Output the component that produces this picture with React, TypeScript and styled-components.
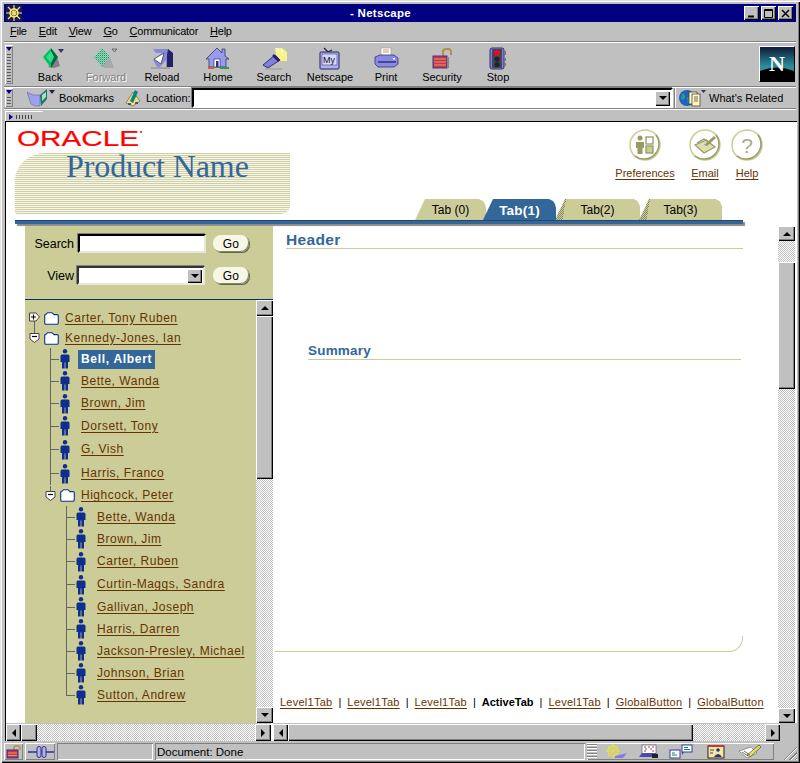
import React from "react";
import styled, { createGlobalStyle } from "styled-components";

const GlobalStyle = createGlobalStyle`
  html, body { margin: 0; padding: 0; background: #c0c0c0; }
  #root { width: 800px; height: 763px; overflow: hidden; }
  * { box-sizing: border-box; }
`;

const checker = `repeating-conic-gradient(#ffffff 0 25%, #c0c0c0 0 50%) 0 0 / 2px 2px`;
const UI = `"Liberation Sans", Arial, sans-serif`;

const Win = styled.div`
  width: 800px; height: 763px; background: #c0c0c0; padding: 4px 4px 3px 4px;
  display: flex; flex-direction: column;
  font-family: ${UI}; font-size: 11px; color: #000;
  box-shadow: inset 1px 1px #dfdfdf, inset 2px 2px #fff, inset -1px -1px #000, inset -2px -2px #808080;
`;
const TitleBar = styled.div`
  height: 18px; flex: none; background: #000080; display: flex; align-items: center;
  padding: 0 3px 0 2px; color: #fff;
`;
const TitleText = styled.div`
  flex: 1; text-align: center; font-weight: 700; font-size: 11.5px; letter-spacing: .3px; padding-right: 5px;
`;
const WinBtn = styled.div<{ $gap?: number }>`
  width: 15px; height: 14px; background: #c0c0c0; margin-left: ${p => p.$gap ?? 0}px;
  box-shadow: inset 1px 1px #fff, inset -1px -1px #000, inset -2px -2px #808080;
  display: flex; align-items: center; justify-content: center;
`;
const MenuBar = styled.div`
  height: 20px; flex: none; display: flex; align-items: center; gap: 12px; padding: 0 0 1px 6px;
  font-size: 11px; letter-spacing: -.25px; border-bottom: 1px solid #808080; box-shadow: 0 1px #fff;
  & > span { display: block; }
`;
const Toolbar = styled.div`
  height: 44px; flex: none; display: flex; padding: 1px 0 0 1px; margin-top: 1px;
  border-bottom: 1px solid #808080; box-shadow: 0 1px #fff;
`;
const Grip = styled.div`
  width: 8px; flex: none; margin-right: 9px; align-self: stretch; margin-top: 1px; margin-bottom: 2px;
  display: flex; flex-direction: column; align-items: center; gap: 2px;
  box-shadow: inset 1px 1px #fff, inset -1px -1px #808080;
  &::before { content: ""; width: 0; height: 0; margin-top: 2px; border: 3px solid transparent; border-top: 4px solid #000080; border-bottom: 0; }
  &::after { content: ""; flex: 1; width: 4px; margin-bottom: 2px; background: radial-gradient(circle, #555 40%, transparent 45%) 0 0 / 2px 3px; }
`;
const ToolBtn = styled.div<{ $off?: boolean }>`
  width: 56px; flex: none; display: flex; flex-direction: column; align-items: center; padding-top: 3px;
  color: ${p => (p.$off ? "#808080" : "#000")};
  text-shadow: ${p => (p.$off ? "1px 1px #fff" : "none")};
  & > svg { display: block; }
`;
const ToolLabel = styled.div` line-height: 13px; white-space: nowrap; `;
const Throbber = styled.div`
  width: 36px; height: 36px; margin: 2px 1px 0 auto; flex: none; overflow: hidden;
  border: 1px solid #000; border-top-color: #fff; border-left-color: #fff;
  & > svg { display: block; }
`;
const LocBar = styled.div`
  height: 21px; flex: none; display: flex; align-items: center; padding-left: 1px; margin-top: 1px;
  border-bottom: 1px solid #808080; box-shadow: 0 1px #fff;
`;
const LocGrip = styled(Grip)` margin-right: 14px; margin-top: 0; margin-bottom: 1px; `;
const LocText = styled.div<{ $w: number; $ml?: number }>`
  width: ${p => p.$w}px; margin-left: ${p => p.$ml ?? 0}px; flex: none; white-space: nowrap; font-size: 11px;
  & > svg { display: block; }
`;
const LocInput = styled.div`
  width: 481px; height: 20px; flex: none; margin-left: 3px; background: #fff; display: flex; justify-content: flex-end; align-items: center; padding-right: 1px;
  border: 2px solid; border-color: #000 #fff #fff #000; box-shadow: -1px -1px #808080;
`;
const Sep = styled.div` width: 2px; height: 20px; margin-left: 1px; background: #808080; border-right: 1px solid #fff; flex: none; `;
const TabBar = styled.div` height: 12px; flex: none; padding: 2px 0 0 1px; display: flex; `;
const Collapsed = styled.div`
  width: 38px; height: 10px; background: #c0c0c0; display: flex; align-items: center; gap: 2px; padding-left: 3px;
  border-top: 1px solid #fff; border-left: 1px solid #fff;
  clip-path: polygon(0 0, 100% 0, 80% 100%, 0 100%);
  &::before { content: ""; border: 3px solid transparent; border-left: 4px solid #000080; border-right: 0; }
  &::after { content: ""; width: 18px; height: 4px; background: radial-gradient(circle, #444 40%, transparent 45%) 0 0 / 3px 2px; }
`;
const Body = styled.div`
  height: 620px; flex: none; margin-left: 1px; margin-right: -1px; background: #fff; display: flex; flex-direction: column;
  border-top: 1px solid #000; border-left: 1px solid #000; overflow: hidden;
`;
const Banner = styled.div` height: 98px; flex: none; padding-left: 9px; width: 760px; display: flex; justify-content: space-between; `;
const BrandCol = styled.div` display: flex; flex-direction: column; padding-left: 1px; & > svg { display: block; margin: 4px 0 0 1px; } `;
const Band = styled.div`
  width: 275px; height: 61px; margin: 2px 0 0 -1px; padding-left: 51px;
  background: repeating-linear-gradient(to bottom, #cfcfa6 0 1px, #f6f6ea 1px 2px);
  border-radius: 30px 0 10px 3px / 28px 0 8px 2px;
  font-family: "Liberation Serif", "Times New Roman", serif; font-size: 32px; color: #336699; line-height: 26px; letter-spacing: -.1px; white-space: nowrap;
`;
const NavCol = styled.div` display: flex; flex-direction: column; align-items: flex-end; `;
const GlobalNav = styled.div` display: grid; grid-template-columns: 74px 42px 32px; justify-items: start; padding: 7px 0 0 0; margin-right: 3px; `;
const NavItem = styled.div<{ $w: number }>`
  width: ${p => p.$w}px; display: flex; flex-direction: column; align-items: center; gap: 6px;
  & > svg { display: block; }
`;
const Link = styled.a`
  color: #663300; text-decoration: underline; text-underline-offset: 2px; white-space: nowrap; font-size: 11px; line-height: 13px;
`;
const FootLink = styled(Link)` letter-spacing: .25px; `;
const Tabs = styled.div` display: flex; margin-top: auto; margin-right: 44px; align-items: flex-end; `;
const Tab = styled.div<{ $w: number; $active?: boolean; $dither?: boolean; $ml?: number }>`
  width: ${p => p.$w}px; height: 21px; margin-left: ${p => p.$ml ?? 0}px; flex: none;
  display: flex; align-items: center; justify-content: center; padding-top: 1px;
  font-size: ${p => (p.$active ? 13.5 : 12)}px; font-weight: ${p => (p.$active ? 700 : 400)};
  letter-spacing: ${p => (p.$active ? ".2px" : "0")};
  color: ${p => (p.$active ? "#fff" : "#000")};
  background: ${p =>
    p.$active
      ? "#336699"
      : p.$dither
      ? "linear-gradient(100deg, transparent 11px, #cccc99 11px), repeating-conic-gradient(#cccc99 0 25%, #888866 0 50%) 0 0 / 2px 2px"
      : "#cccc99"};
  clip-path: polygon(0 100%, 10px 0, calc(100% - 7px) 0, calc(100% - 3px) 2px, calc(100% - 1px) 5px, 100% 9px, 100% 100%);
  position: relative; z-index: ${p => (p.$active ? 2 : 1)};
`;
const Rule = styled.div`
  width: 728px; height: 4px; margin-left: 9px; flex: none; background: #336699; border-top: 1px solid #1d4a6e;
  box-shadow: 2px 2px 1px #8a8a8a;
`;
const Frames = styled.div` flex: 1; min-height: 0; display: flex; margin-top: 2px; `;
const LeftFrame = styled.div` width: 267px; flex: none; display: flex; flex-direction: column; `;
const LeftBody = styled.div` flex: 1; min-height: 0; display: flex; padding-left: 19px; `;
const NavPanel = styled.div` width: 248px; display: flex; flex-direction: column; `;
const SearchForm = styled.div`
  height: 74px; flex: none; background: #cccc99; border-bottom: 1px solid #003366; padding-top: 8px;
  display: flex; flex-direction: column; gap: 13px;
`;
const FormRow = styled.div` display: flex; align-items: center; `;
const FormLabel = styled.div` width: 50px; text-align: right; font-size: 12.5px; padding-right: 1px; `;
const TextBox = styled.div`
  width: 128px; height: 19px; background: #fff; margin-left: 3px; flex: none;
  border: 2px solid; border-color: #000 #e8e8d8 #e8e8d8 #000;  box-shadow: -1px -1px #808080;
`;
const SelectBox = styled(TextBox)`
  margin-left: 2px; display: flex; justify-content: flex-end; align-items: center; padding-right: 1px;
  border-color: #333 #e8e8d8 #e8e8d8 #333;
`;
const GoBtn = styled.div<{ $ml: number }>`
  width: 36px; height: 17px; margin-left: ${p => p.$ml}px; flex: none; background: #f7f7e7; border-radius: 8px;
  display: flex; align-items: center; justify-content: center; font-size: 12px; letter-spacing: .3px;
  box-shadow: inset -1px -1px #888866, 1px 1px #666644;
`;
const TreeWrap = styled.div` flex: 1; min-height: 0; display: flex; `;
const Tree = styled.div` width: 231px; flex: none; background: #cccc99; padding-top: 8px; display: flex; flex-direction: column; `;
const Row = styled.div<{ $h: number; $pad: number }>`
  height: ${p => p.$h}px; flex: none; padding-left: ${p => p.$pad}px; display: flex; align-items: center;
  & > svg { display: block; flex: none; }
`;
const ExpanderBox = styled.div`
  width: 15px; flex: none; & > svg { display: block; }
`;
const Branch = styled.div<{ $last?: boolean }>`
  width: 9px; align-self: stretch; flex: none; margin-right: 1px;
  background:
    linear-gradient(#666, #666) left top / 1px ${p => (p.$last ? "50%" : "100%")} no-repeat,
    linear-gradient(#666, #666) left center / 100% 1px no-repeat;
`;
const Name = styled.a<{ $sel?: boolean; $ml: number }>`
  display: block; margin-left: ${p => p.$ml}px; padding: 0 3px; white-space: nowrap; font-size: 12px;
  letter-spacing: ${p => (p.$sel ? ".7px" : ".52px")};
  line-height: ${p => (p.$sel ? "19px" : "17px")};
  color: ${p => (p.$sel ? "#fff" : "#663300")};
  font-weight: ${p => (p.$sel ? 700 : 400)};
  background: ${p => (p.$sel ? "#336699" : "transparent")};
  text-decoration: ${p => (p.$sel ? "none" : "underline")}; text-underline-offset: 2px;
`;
const VScroll = styled.div<{ $w: number }>`
  width: ${p => p.$w}px; flex: none; display: flex; flex-direction: column; background: ${checker};
`;
const ScrollBtn = styled.div<{ $w?: number; $h?: number }>`
  width: ${p => (p.$w ? `${p.$w}px` : "auto")}; height: ${p => (p.$h ? `${p.$h}px` : "auto")}; flex: none;
  background: #c0c0c0; display: flex; align-items: center; justify-content: center;
  box-shadow: inset 1px 1px #fff, inset -1px -1px #000, inset -2px -2px #808080;
`;
const Thumb = styled(ScrollBtn)` `;
const Fill = styled.div` flex: 1; min-width: 0; min-height: 0; `;
const TrackGap = styled.div<{ $h: number }>` height: ${p => p.$h}px; flex: none; `;
const Arrow = styled.div<{ $dir: "up" | "down" | "left" | "right" }>`
  width: 0; height: 0; border: 4px solid transparent;
  ${p => (p.$dir === "up" ? "border-top:0;border-bottom-color:#000;" : "")}
  ${p => (p.$dir === "down" ? "border-bottom:0;border-top-color:#000;" : "")}
  ${p => (p.$dir === "left" ? "border-left:0;border-right-color:#000;" : "")}
  ${p => (p.$dir === "right" ? "border-right:0;border-left-color:#000;" : "")}
`;
const HScroll = styled.div` height: 18px; flex: none; display: flex; background: ${checker}; border-top: 1px solid #c0c0c0; `;
const LeftHScroll = styled(HScroll)` margin-right: 2px; `;
const RightFrame = styled.div` flex: 1; min-width: 0; display: flex; flex-direction: column; `;
const RightBody = styled.div` flex: 1; min-height: 0; display: flex; `;
const Main = styled.div` width: 505px; flex: none; display: flex; flex-direction: column; `;
const H1 = styled.div`
  margin: 5px 35px 0 13px; height: 18px; line-height: 17px; font-size: 15.5px; font-weight: 700; letter-spacing: .35px; color: #336699;
  border-bottom: 1px solid #cccc99;
`;
const H2 = styled.div`
  margin: 94px 37px 0 35px; height: 17px; line-height: 15px; font-size: 13.5px; font-weight: 700; letter-spacing: .2px; color: #336699;
  border-bottom: 1px solid #cccc99;
`;
const Curve = styled.div`
  width: 468px; height: 16px; margin: 276px 0 0 2px; flex: none;
  border-right: 1px solid #cccc99; border-bottom: 1px solid #cccc99; border-bottom-right-radius: 14px;
`;
const Footer = styled.div`
  margin-top: auto; padding: 0 0 14px 7px; display: flex; align-items: center; gap: 6px; font-size: 11px; line-height: 13px; white-space: nowrap;
`;
const Active = styled.b` font-weight: 700; `;
const RCorner = styled.div` width: 17px; flex: none; background: #c0c0c0; `;
const RHBar = styled(HScroll)` flex: 1; `;
const RHWrap = styled.div` display: flex; height: 18px; flex: none; `;
const Status = styled.div` height: 17px; flex: none; margin-top: 2px; display: flex; gap: 2px; `;
const Cell = styled.div<{ $w?: number; $flat?: boolean }>`
  ${p => (p.$w ? `width:${p.$w}px;flex:none;` : "flex:1;")}
  display: flex; align-items: center; padding-left: 2px; font-size: 11.5px; min-width: 0;
  box-shadow: ${p => (p.$flat ? "inset 1px 1px #fff, inset -1px -1px #808080" : "inset 1px 1px #808080, inset -1px -1px #fff")};
`;
const ComponentBar = styled(Cell)` padding-left: 0; gap: 0; `;
const CompGrip = styled.div`
  width: 10px; height: 15px; flex: none; background: repeating-linear-gradient(to bottom, #808080 0 1px, #fff 1px 2px, #c0c0c0 2px 3px);
`;
const CompIcon = styled.div<{ $w: number }>`
  width: ${p => p.$w}px; flex: none; display: flex; justify-content: center; & > svg { display: block; }
`;
const Resize = styled.div`
  width: 14px; height: 14px; flex: none; margin: 3px -1px 0 auto; align-self: flex-end;
  background: repeating-linear-gradient(135deg, transparent 0 2px, #808080 2px 3px, #fff 3px 4px);
  clip-path: polygon(100% 0, 100% 100%, 0 100%);
`;

const Back = ({ off }: { off?: boolean }) => (
  <svg width="28" height="24" viewBox="0 0 28 24">
    <defs>
      <pattern id="dit" width="2" height="2" patternUnits="userSpaceOnUse">
        <rect width="2" height="2" fill="#c0c0c0" />
        <rect width="1" height="1" fill="#00a060" />
        <rect x="1" y="1" width="1" height="1" fill="#40d890" />
      </pattern>
    </defs>
    {off ? (
      <>
        <polygon points="2,10 10,1 18,10 10,20" fill="url(#dit)" />
        <polygon points="10,20 18,10 22,21 14,21" fill="#9a9a9a" opacity=".6" />
        <path d="M20 2h5l-2.5 3z" fill="none" stroke="#555" strokeWidth=".8" />
      </>
    ) : (
      <>
        <polygon points="12,20 21,10 24,19 18,21" fill="#808080" />
        <polygon points="7,10 15,1 15,21" fill="#00c060" />
        <polygon points="15,1 22,10 15,21" fill="#006a3a" />
        <polygon points="10,10 15,4 18,10 15,16" fill="#2ce08a" />
        <path d="M22 2h6l-3 4z" fill="#333366" />
      </>
    )}
  </svg>
);
const Reload = () => (
  <svg width="28" height="24" viewBox="0 0 28 24">
    <path d="M5 13 L14 6 H8 L5 2 H20 L24 6 V20 H18 V13 L12 20 H9Z" fill="#8888dd" />
    <path d="M20 2 L25 6 V20 H19 V8 Z" fill="#222266" />
    <path d="M6 12 L16 6 L13 17 Z" fill="#fff" />
    <path d="M6 12 L16 6 L13 17 Z" fill="none" stroke="#333" strokeWidth=".7" />
    <path d="M3 21 H22" stroke="#999" strokeWidth="1.5" />
  </svg>
);
const Home = () => (
  <svg width="28" height="24" viewBox="0 0 28 24">
    <path d="M2 12 L13 1 L18 6 V2 H21 V9 L25 12 H22 V20 H5 V12Z" fill="#9a9aea" stroke="#333377" strokeWidth=".8" />
    <rect x="10" y="12" width="6" height="8" fill="#fff" stroke="#333377" strokeWidth=".7" />
    <rect x="12" y="14" width="2.5" height="6" fill="#333377" />
    <path d="M4 21 H10" stroke="#d06030" strokeWidth="2" />
    <path d="M16 21 H25" stroke="#2a9a50" strokeWidth="2" />
  </svg>
);
const SearchIc = () => (
  <svg width="28" height="24" viewBox="0 0 28 24">
    <path d="M15 1 H22 L27 5 V14 H21 L16 7Z" fill="#f4f48a" />
    <path d="M16 1 l3 3 m3-2 v4" stroke="#fff" strokeWidth="1" />
    <path d="M3 18 L15 8 L20 13 L8 21 Z" fill="#8080e0" stroke="#222266" strokeWidth=".9" />
    <path d="M13 8 L19 14" stroke="#222266" strokeWidth="2.5" />
    <path d="M5 22 H22" stroke="#999" strokeWidth="1" />
  </svg>
);
const MyNs = () => (
  <svg width="28" height="24" viewBox="0 0 28 24">
    <path d="M8 1 L12 5 L16 3" stroke="#222" strokeWidth="1.2" fill="none" />
    <rect x="4" y="5" width="19" height="17" rx="1" fill="#b0b0f0" stroke="#222266" />
    <rect x="6" y="7" width="15" height="11" fill="#d8d8ff" stroke="#444488" strokeWidth=".6" />
    <text x="7" y="16" fontFamily="Liberation Sans" fontSize="9" fill="#111">My</text>
  </svg>
);
const Print = () => (
  <svg width="28" height="24" viewBox="0 0 28 24">
    <path d="M9 1 H19 V9 H9Z" fill="#fff" stroke="#999" strokeWidth=".6" />
    <path d="M11 3h6M11 5h6" stroke="#d0a060" strokeWidth="1" />
    <path d="M3 10 L8 8 H22 L26 11 V17 L22 20 H6 L3 17Z" fill="#8a8ae6" stroke="#333377" strokeWidth=".8" />
    <path d="M6 15 H24" stroke="#222266" strokeWidth="1.3" />
    <rect x="21" y="11" width="2" height="1.5" fill="#fff" />
  </svg>
);
const Lock = () => (
  <svg width="28" height="24" viewBox="0 0 28 24">
    <path d="M15 9 V5 Q15 2 18 2 H20 Q23 2 23 5 V8" fill="none" stroke="#b0904c" strokeWidth="2" />
    <rect x="5" y="9" width="14" height="12" fill="#c83060" stroke="#3a3a80" />
    <path d="M6 12h12M6 15h12M6 18h12" stroke="#e8a040" strokeWidth="1" />
    <path d="M20 10 V21" stroke="#888" strokeWidth="2" />
  </svg>
);
const Stop = () => (
  <svg width="28" height="24" viewBox="0 0 28 24">
    <rect x="6" y="1" width="14" height="21" rx="2" fill="#8080d8" stroke="#333377" />
    <rect x="8" y="2" width="10" height="19" fill="#44445a" />
    <circle cx="13" cy="6" r="3" fill="#e01020" />
    <circle cx="13" cy="12" r="2.6" fill="#222" />
    <circle cx="13" cy="17.5" r="2.6" fill="#222" />
    <path d="M21 4v4M21 11v3M21 16v3" stroke="#777" strokeWidth="2" />
  </svg>
);
const NLogo = () => (
  <svg width="34" height="34" viewBox="0 0 34 34">
    <defs>
      <linearGradient id="ng" x1="0" y1="0" x2="0" y2="1">
        <stop offset="0" stopColor="#101838" />
        <stop offset=".55" stopColor="#2a8a98" />
        <stop offset="1" stopColor="#40a0a0" />
      </linearGradient>
    </defs>
    <rect width="34" height="34" fill="url(#ng)" />
    <path d="M0 24 Q17 17 34 24 V34 H0Z" fill="#000" />
    <text x="17" y="24" textAnchor="middle" fontFamily="Liberation Serif" fontWeight="700" fontSize="22" fill="#fff">N</text>
  </svg>
);
const Star = () => (
  <svg width="16" height="16" viewBox="0 0 16 16">
    <rect width="16" height="16" fill="#1a1a50" />
    <path d="M8 0V16M0 8H16M2 2L14 14M14 2L2 14" stroke="#f8e860" strokeWidth="1.2" />
    <circle cx="8" cy="8" r="4" fill="none" stroke="#fff080" strokeWidth="1.5" />
  </svg>
);
const Bookmark = () => (
  <svg width="28" height="18" viewBox="0 0 28 18">
    <path d="M0 3 L6 6 H13 V17 H8 L4 15Z" fill="#a0a0f0" stroke="#555599" strokeWidth=".5" />
    <path d="M13 6 L20 0 V10 L14 17Z" fill="#108060" />
    <path d="M15 6 L19 3 V8 L15 12Z" fill="#fff" opacity=".7" />
    <path d="M22 1 H28 L25 5Z" fill="#222244" />
  </svg>
);
const LocIcon = () => (
  <svg width="16" height="18" viewBox="0 0 16 18">
    <path d="M1 14 L8 3 L15 12 L8 17Z" fill="#e8e070" stroke="#555" strokeWidth=".6" />
    <path d="M5 12 L10 1 L13 3 L8 14Z" fill="#108080" />
    <path d="M3 15h3M10 14h3" stroke="#2030a0" strokeWidth="1.4" />
  </svg>
);
const Related = () => (
  <svg width="28" height="18" viewBox="0 0 28 18">
    <circle cx="8" cy="9" r="8" fill="#2060c0" />
    <path d="M3 4 Q7 6 6 9 Q4 12 2 10Z M8 8 Q12 8 12 12 L9 15Z" fill="#20a080" />
    <rect x="10" y="3" width="8" height="12" fill="#fff8c0" stroke="#333" strokeWidth=".7" />
    <rect x="13" y="5" width="8" height="12" fill="#fff8c0" stroke="#333" strokeWidth=".7" />
    <path d="M15 8h4M15 10h4M15 12h4" stroke="#444" strokeWidth=".8" />
    <path d="M22 1 H27 L24.5 4Z" fill="#333366" />
  </svg>
);
const DropArrow = () => (
  <ScrollBtn $w={15} $h={15}><Arrow $dir="down" /></ScrollBtn>
);
const Oracle = () => (
  <svg width="126" height="25" viewBox="0 0 126 25">
    <text x="0" y="20" fontFamily="Liberation Sans" fontSize="21.5" fill="#ff0000" stroke="#ff0000" strokeWidth=".2" textLength="122" lengthAdjust="spacingAndGlyphs">ORACLE</text>
    <circle cx="124" cy="6" r="1" fill="#ff0000" />
  </svg>
);
const Circle = ({ children }: { children?: React.ReactNode }) => (
  <svg width="32" height="32" viewBox="0 0 32 32">
    <circle cx="16" cy="16" r="15" fill="#fff" stroke="#cccc99" strokeWidth="1.5" />
    <path d="M27 6 A15 15 0 0 1 6 27" fill="none" stroke="#999966" strokeWidth="1.5" />
    {children}
  </svg>
);
const PrefIc = () => (
  <Circle>
    <circle cx="11" cy="9" r="2.5" fill="#999966" />
    <path d="M7 13 H15 V19 H13.5 V25 H8.5 V19 H7Z" fill="#999966" />
    <rect x="17" y="8" width="7" height="7" fill="#fff" stroke="#999966" strokeWidth="1.3" />
    <rect x="17" y="17" width="7" height="7" fill="#cccc99" stroke="#999966" strokeWidth="1.3" />
  </Circle>
);
const MailIc = () => (
  <Circle>
    <path d="M6 16 L17 11 L26 18 L15 24Z" fill="#ddddb0" stroke="#999966" strokeWidth="1.2" />
    <path d="M8 14 L15 10 L21 14" fill="none" stroke="#999966" strokeWidth="1.2" />
    <path d="M15 16 L25 7 L27 9 L18 17Z" fill="#999966" />
  </Circle>
);
const HelpIc = () => (
  <Circle>
    <text x="16" y="24" textAnchor="middle" fontFamily="Liberation Sans" fontSize="21" fill="#aaaa88">?</text>
  </Circle>
);
const Person = () => (
  <svg width="10" height="20" viewBox="0 0 10 20">
    <circle cx="5" cy="2.2" r="2.2" fill="#0f2f8f" />
    <path d="M.5 7 Q.5 5.5 2 5.5 H8 Q9.5 5.5 9.5 7 V13 H8 V19.5 H5.4 V13.5 H4.6 V19.5 H2 V13 H.5Z" fill="#0f2f8f" />
  </svg>
);
const Folder = () => (
  <svg width="15" height="13" viewBox="0 0 15 13">
    <path d="M.7 11 V3.5 Q.7 2.6 1.6 2.6 L3.6.7 H8 L10 2.6 H13 Q14.3 2.6 14.3 3.6 V11 Q14.3 12.3 13 12.3 H2 Q.7 12.3 .7 11Z" fill="#fff" stroke="#0f2f8f" strokeWidth="1.1" />
  </svg>
);
const Expander = ({ open, top, bottom }: { open?: boolean; top?: boolean; bottom?: boolean }) => (
  <svg width="11" height="20" viewBox="0 0 11 20">
    {top && <path d="M5.5 0V6" stroke="#666" />}
    {bottom && <path d="M5.5 12V20" stroke="#666" />}
    {open ? (
      <>
        <path d="M1 5.5 H10 V11 L5.5 14.5 L1 11Z" fill="#fff" stroke="#444" />
        <path d="M3 8.5H8" stroke="#000" strokeWidth="1.2" />
      </>
    ) : (
      <>
        <path d="M.5 5 H7 L10.5 9 L7 13 H.5Z" fill="#fff" stroke="#444" />
        <path d="M2 9H7M4.5 6.5V11.5" stroke="#000" strokeWidth="1.1" />
      </>
    )}
  </svg>
);
const StatusLock = () => (
  <svg width="16" height="14" viewBox="0 0 16 14">
    <path d="M8 5V3Q8 1 10 1H12Q14 1 14 3V5" fill="none" stroke="#b09040" strokeWidth="1.4" />
    <rect x="1" y="5" width="11" height="8" fill="#c83060" stroke="#33337a" />
    <path d="M2 8h9M2 10.5h9" stroke="#e8a040" />
  </svg>
);
const Plug = () => (
  <svg width="28" height="14" viewBox="0 0 28 14">
    <path d="M1 7H27" stroke="#5050b0" strokeWidth="2" />
    <rect x="10" y="1.5" width="4" height="11" rx="2" fill="#b0b0f0" stroke="#33337a" />
    <rect x="15" y="1.5" width="4" height="11" rx="2" fill="#b0b0f0" stroke="#33337a" />
  </svg>
);
const Comp1 = () => (
  <svg width="22" height="15" viewBox="0 0 22 15">
    <circle cx="8" cy="7" r="5" fill="none" stroke="#e8e040" strokeWidth="1.5" />
    <path d="M8 0V14M1 7H15M3 2L13 12M13 2L3 12" stroke="#e8e040" />
    <path d="M10 12L22 9L18 14H10Z" fill="#8080d8" />
  </svg>
);
const Comp2 = () => (
  <svg width="20" height="15" viewBox="0 0 20 15">
    <rect x="3" y="1" width="14" height="9" fill="#fff" stroke="#555599" strokeWidth=".7" />
    <path d="M5 3h2M9 3h2M13 3h2M6 5h2M11 5h2M5 7h2M13 7h2" stroke="#c03040" />
    <path d="M0 13 L3 9 H17 L18 13Z" fill="#4a4ab0" />
    <rect x="13" y="10" width="6" height="4" fill="#222" />
  </svg>
);
const Comp3 = () => (
  <svg width="24" height="15" viewBox="0 0 24 15">
    <rect x="1" y="6" width="10" height="8" fill="#fff" stroke="#3040a0" />
    <path d="M3 9h3M3 11h5" stroke="#108080" />
    <rect x="13" y="1" width="10" height="7" fill="#fff" stroke="#3040a0" />
    <path d="M15 3.5h4M15 5.5h6" stroke="#108080" />
    <path d="M15 8L13 11V8Z" fill="#3040a0" />
  </svg>
);
const Comp4 = () => (
  <svg width="18" height="15" viewBox="0 0 18 15">
    <rect x="1" y="2" width="16" height="12" fill="#f4e8a0" stroke="#222" />
    <path d="M1 2H17" stroke="#e02020" strokeWidth="1.5" />
    <circle cx="11" cy="6" r="1.8" fill="#303080" />
    <path d="M7 13 Q11 7 15 13Z" fill="#303080" />
    <path d="M3 6h4M3 9h3" stroke="#3040a0" />
  </svg>
);
const Comp5 = () => (
  <svg width="22" height="15" viewBox="0 0 22 15">
    <path d="M0 7 L12 3 L18 9 L8 14Z" fill="#fff" stroke="#666" strokeWidth=".6" />
    <path d="M8 11 L20 1 L22 3 L11 13Z" fill="#e8e060" stroke="#333" strokeWidth=".6" />
    <path d="M3 8l6 4M5 7l6 4" stroke="#333" strokeWidth=".7" />
  </svg>
);

type Item = { n: string; h: number; k: "root" | "rootOpen" | "sub" | "l1" | "l2"; sel?: boolean; last?: boolean };
const tree: Item[] = [
  { n: "Carter, Tony Ruben", h: 20, k: "root" },
  { n: "Kennedy-Jones, Ian", h: 20, k: "rootOpen" },
  { n: "Bell, Albert", h: 22, k: "l1", sel: true },
  { n: "Bette, Wanda", h: 22, k: "l1" },
  { n: "Brown, Jim", h: 23, k: "l1" },
  { n: "Dorsett, Tony", h: 22, k: "l1" },
  { n: "G, Vish", h: 25, k: "l1" },
  { n: "Harris, Franco", h: 23, k: "l1" },
  { n: "Highcock, Peter", h: 21, k: "sub" },
  { n: "Bette, Wanda", h: 22, k: "l2" },
  { n: "Brown, Jim", h: 22, k: "l2" },
  { n: "Carter, Ruben", h: 23, k: "l2" },
  { n: "Curtin-Maggs, Sandra", h: 23, k: "l2" },
  { n: "Gallivan, Joseph", h: 22, k: "l2" },
  { n: "Harris, Darren", h: 22, k: "l2" },
  { n: "Jackson-Presley, Michael", h: 22, k: "l2" },
  { n: "Johnson, Brian", h: 22, k: "l2" },
  { n: "Sutton, Andrew", h: 22, k: "l2", last: true },
];

const TreeRow = ({ it }: { it: Item }) => {
  if (it.k === "root" || it.k === "rootOpen") {
    const open = it.k === "rootOpen";
    return (
      <Row $h={it.h} $pad={4}>
        <ExpanderBox><Expander open={open} bottom={!open} top={open} /></ExpanderBox>
        <Folder />
        <Name $ml={3}>{it.n}</Name>
      </Row>
    );
  }
  if (it.k === "sub") {
    return (
      <Row $h={it.h} $pad={20}>
        <ExpanderBox><Expander open top /></ExpanderBox>
        <Folder />
        <Name $ml={3}>{it.n}</Name>
      </Row>
    );
  }
  return (
    <Row $h={it.h} $pad={it.k === "l1" ? 25 : 41}>
      <Branch $last={it.last} />
      <Person />
      <Name $ml={8} $sel={it.sel}>{it.n}</Name>
    </Row>
  );
};

const tools: [string, React.ReactNode, boolean?][] = [
  ["Back", <Back />],
  ["Forward", <Back off />, true],
  ["Reload", <Reload />],
  ["Home", <Home />],
  ["Search", <SearchIc />],
  ["Netscape", <MyNs />],
  ["Print", <Print />],
  ["Security", <Lock />],
  ["Stop", <Stop />],
];

const Pipe = () => <span>|</span>;

export default function App() {
  return (
    <Win>
      <GlobalStyle />
      <TitleBar>
        <Star />
        <TitleText>- Netscape</TitleText>
        <WinBtn><svg width="9" height="9"><path d="M1 7.5H7" stroke="#000" strokeWidth="2" /></svg></WinBtn>
        <WinBtn $gap={2}><svg width="9" height="9"><path d="M.5.5H8.5V8.5H.5ZM.5 1.5H8.5" fill="none" stroke="#000" /></svg></WinBtn>
        <WinBtn $gap={2}><svg width="9" height="9"><path d="M1 1L8 8M8 1L1 8" stroke="#000" strokeWidth="1.5" /></svg></WinBtn>
      </TitleBar>
      <MenuBar>
        <span><u>F</u>ile</span>
        <span><u>E</u>dit</span>
        <span><u>V</u>iew</span>
        <span><u>G</u>o</span>
        <span><u>C</u>ommunicator</span>
        <span><u>H</u>elp</span>
      </MenuBar>
      <Toolbar>
        <Grip />
        {tools.map(([label, icon, off]) => (
          <ToolBtn key={label} $off={off}>
            {icon}
            <ToolLabel>{label}</ToolLabel>
          </ToolBtn>
        ))}
        <Throbber><NLogo /></Throbber>
      </Toolbar>
      <LocBar>
        <LocGrip />
        <Bookmark />
        <LocText $w={54} $ml={4}>Bookmarks</LocText>
        <LocText $w={16} $ml={12}><LocIcon /></LocText>
        <LocText $w={43} $ml={5}>Location:</LocText>
        <LocInput><DropArrow /></LocInput>
        <Sep />
        <LocText $w={28} $ml={3}><Related /></LocText>
        <LocText $w={76} $ml={2}>What's Related</LocText>
      </LocBar>
      <TabBar><Collapsed /></TabBar>
      <Body>
        <Banner>
          <BrandCol>
            <Oracle />
            <Band>Product Name</Band>
          </BrandCol>
          <NavCol>
            <GlobalNav>
              <NavItem $w={60}><PrefIc /><Link>Preferences</Link></NavItem>
              <NavItem $w={32}><MailIc /><Link>Email</Link></NavItem>
              <NavItem $w={32}><HelpIc /><Link>Help</Link></NavItem>
            </GlobalNav>
            <Tabs>
              <Tab $w={71}>Tab (0)</Tab>
              <Tab $w={73} $active $ml={-3}>Tab(1)</Tab>
              <Tab $w={85} $dither $ml={-1}>Tab(2)</Tab>
              <Tab $w={83} $dither $ml={-1}>Tab(3)</Tab>
            </Tabs>
          </NavCol>
        </Banner>
        <Rule />
        <Frames>
          <LeftFrame>
            <LeftBody>
              <NavPanel>
                <SearchForm>
                  <FormRow>
                    <FormLabel>Search</FormLabel>
                    <TextBox />
                    <GoBtn $ml={7}>Go</GoBtn>
                  </FormRow>
                  <FormRow>
                    <FormLabel>View</FormLabel>
                    <SelectBox><ScrollBtn $w={15} $h={14}><Arrow $dir="down" /></ScrollBtn></SelectBox>
                    <GoBtn $ml={8}>Go</GoBtn>
                  </FormRow>
                </SearchForm>
                <TreeWrap>
                  <Tree>
                    {tree.map((it, i) => <TreeRow key={i} it={it} />)}
                  </Tree>
                  <VScroll $w={17}>
                    <ScrollBtn $h={16}><Arrow $dir="up" /></ScrollBtn>
                    <Thumb $h={163} />
                    <Fill />
                    <ScrollBtn $h={16}><Arrow $dir="down" /></ScrollBtn>
                  </VScroll>
                </TreeWrap>
              </NavPanel>
            </LeftBody>
            <LeftHScroll>
              <ScrollBtn $w={15}><Arrow $dir="left" /></ScrollBtn>
              <Thumb $w={16} />
              <Fill />
              <ScrollBtn $w={16}><Arrow $dir="right" /></ScrollBtn>
            </LeftHScroll>
          </LeftFrame>
          <RightFrame>
            <RightBody>
              <Main>
                <H1>Header</H1>
                <H2>Summary</H2>
                <Curve />
                <Footer>
                  <FootLink>Level1Tab</FootLink><Pipe />
                  <FootLink>Level1Tab</FootLink><Pipe />
                  <FootLink>Level1Tab</FootLink><Pipe />
                  <Active>ActiveTab</Active><Pipe />
                  <FootLink>Level1Tab</FootLink><Pipe />
                  <FootLink>GlobalButton</FootLink><Pipe />
                  <FootLink>GlobalButton</FootLink>
                </Footer>
              </Main>
              <VScroll $w={17}>
                <ScrollBtn $h={15}><Arrow $dir="up" /></ScrollBtn>
                <TrackGap $h={21} />
                <Thumb $h={127} />
                <Fill />
                <ScrollBtn $h={15}><Arrow $dir="down" /></ScrollBtn>
              </VScroll>
            </RightBody>
            <RHWrap>
              <RHBar>
                <ScrollBtn $w={15}><Arrow $dir="left" /></ScrollBtn>
                <Thumb $w={405} />
                <Fill />
                <ScrollBtn $w={15}><Arrow $dir="right" /></ScrollBtn>
              </RHBar>
              <RCorner />
            </RHWrap>
          </RightFrame>
        </Frames>
      </Body>
      <Status>
        <Cell $w={19} $flat><StatusLock /></Cell>
        <Cell $w={30} $flat><Plug /></Cell>
        <Cell $w={96} />
        <Cell $w={430}>Document: Done</Cell>
        <ComponentBar $w={187} $flat>
          <CompGrip />
          <CompIcon $w={38}><Comp1 /></CompIcon>
          <CompIcon $w={28}><Comp2 /></CompIcon>
          <CompIcon $w={36}><Comp3 /></CompIcon>
          <CompIcon $w={34}><Comp4 /></CompIcon>
          <CompIcon $w={34}><Comp5 /></CompIcon>
        </ComponentBar>
        <Resize />
      </Status>
    </Win>
  );
}
